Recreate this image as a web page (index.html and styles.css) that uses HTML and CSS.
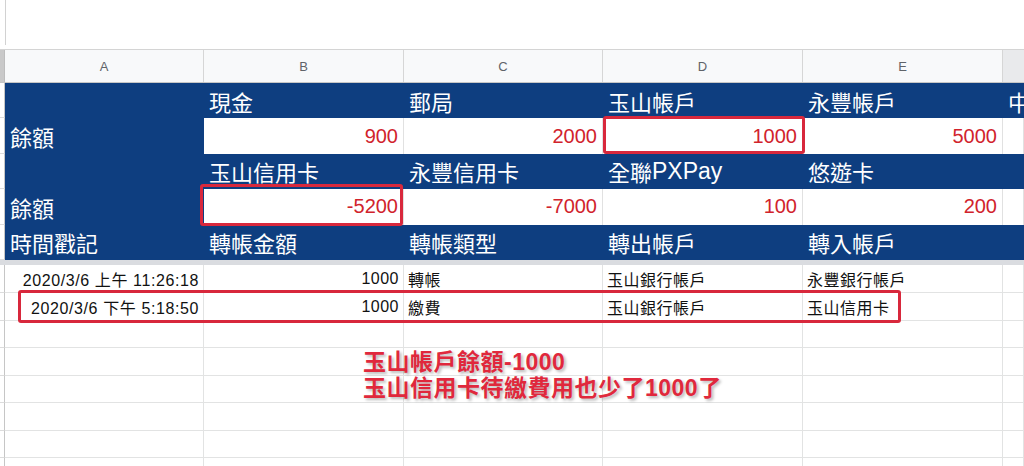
FILE: index.html
```html
<!DOCTYPE html>
<html lang="zh-Hant">
<head>
<meta charset="utf-8">
<title>轉帳紀錄</title>
<link rel="stylesheet" href="styles.css">
</head>
<body>
<div class="sheet">
  <div class="topbar"><div class="topbar-edge"></div></div>

  <div class="grid-row colheads">
    <div class="corner"></div>
    <div class="ch">A</div>
    <div class="ch">B</div>
    <div class="ch">C</div>
    <div class="ch">D</div>
    <div class="ch">E</div>
    <div class="ch ch-f"></div>
  </div>

  <div class="frozen">
    <div class="grid-row brow">
      <div class="rh"></div>
      <div class="bc"></div>
      <div class="bc">現金</div>
      <div class="bc">郵局</div>
      <div class="bc">玉山帳戶</div>
      <div class="bc">永豐帳戶</div>
      <div class="bc">中</div>
    </div>
    <div class="grid-row brow">
      <div class="rh"></div>
      <div class="bc">餘額</div>
      <div class="val">900</div>
      <div class="val">2000</div>
      <div class="val">1000</div>
      <div class="val">5000</div>
      <div class="val"></div>
    </div>
    <div class="grid-row brow">
      <div class="rh"></div>
      <div class="bc"></div>
      <div class="bc">玉山信用卡</div>
      <div class="bc">永豐信用卡</div>
      <div class="bc">全聯<span class="lat">PXPay</span></div>
      <div class="bc">悠遊卡</div>
      <div class="bc"></div>
    </div>
    <div class="grid-row brow">
      <div class="rh"></div>
      <div class="bc">餘額</div>
      <div class="val">-5200</div>
      <div class="val">-7000</div>
      <div class="val">100</div>
      <div class="val">200</div>
      <div class="val"></div>
    </div>
    <div class="grid-row brow">
      <div class="rh"></div>
      <div class="bc">時間戳記</div>
      <div class="bc">轉帳金額</div>
      <div class="bc">轉帳類型</div>
      <div class="bc">轉出帳戶</div>
      <div class="bc">轉入帳戶</div>
      <div class="bc"></div>
    </div>
  </div>

  <div class="divider"></div>

  <div class="data">
    <div class="grid-row drow first">
      <div class="rh"></div>
      <div class="dc num date">2020/3/6 上午 11:26:18</div>
      <div class="dc num">1000</div>
      <div class="dc">轉帳</div>
      <div class="dc">玉山銀行帳戶</div>
      <div class="dc">永豐銀行帳戶</div>
      <div class="dc"></div>
    </div>
    <div class="grid-row drow">
      <div class="rh"></div>
      <div class="dc num date">2020/3/6 下午 5:18:50</div>
      <div class="dc num">1000</div>
      <div class="dc">繳費</div>
      <div class="dc">玉山銀行帳戶</div>
      <div class="dc">玉山信用卡</div>
      <div class="dc"></div>
    </div>
    <div class="grid-row drow"><div class="rh"></div><div class="dc"></div><div class="dc"></div><div class="dc"></div><div class="dc"></div><div class="dc"></div><div class="dc"></div></div>
    <div class="grid-row drow"><div class="rh"></div><div class="dc"></div><div class="dc"></div><div class="dc"></div><div class="dc"></div><div class="dc"></div><div class="dc"></div></div>
    <div class="grid-row drow"><div class="rh"></div><div class="dc"></div><div class="dc"></div><div class="dc"></div><div class="dc"></div><div class="dc"></div><div class="dc"></div></div>
    <div class="grid-row drow"><div class="rh"></div><div class="dc"></div><div class="dc"></div><div class="dc"></div><div class="dc"></div><div class="dc"></div><div class="dc"></div></div>
    <div class="grid-row drow"><div class="rh"></div><div class="dc"></div><div class="dc"></div><div class="dc"></div><div class="dc"></div><div class="dc"></div><div class="dc"></div></div>
    <div class="grid-row drow"><div class="rh"></div><div class="dc"></div><div class="dc"></div><div class="dc"></div><div class="dc"></div><div class="dc"></div><div class="dc"></div></div>
  </div>

  <div class="box box-d"></div>
  <div class="box box-b"></div>
  <div class="box box-row"></div>

  <div class="note">
    <span>玉山帳戶餘額-1000</span>
    <span>玉山信用卡待繳費用也少了1000了</span>
  </div>
</div>
</body>
</html>
```

FILE: styles.css
```css
html, body {
  margin: 0;
  padding: 0;
  background: #fff;
  overflow: hidden;
}

body {
  font-family: "Liberation Sans", "Noto Sans CJK TC", sans-serif;
}

.sheet {
  position: relative;
  width: 1024px;
  height: 466px;
  overflow: hidden;
}

.topbar {
  height: 49px;
  display: flex;
}

.topbar-edge {
  width: 6px;
  height: 45px;
  border-right: 1px solid #d2d2d2;
  box-sizing: border-box;
}

.grid-row {
  display: grid;
  grid-template-columns: 5px 199px 200px 199px 200px 200px 21px;
}

.grid-row > div {
  box-sizing: border-box;
  min-width: 0;
  overflow: hidden;
  white-space: nowrap;
}

/* column headers */
.colheads {
  height: 34px;
  box-sizing: border-box;
  border-top: 1px solid #d4d4d4;
  border-bottom: 1px solid #c6c6c6;
  background: #f8f9fa;
}

.corner {
  background: #c9c9c9;
  border-right: 1px solid #bdbdbd;
}

.ch {
  display: flex;
  align-items: center;
  justify-content: center;
  border-right: 1px solid #d6d6d6;
  font-size: 13px;
  color: #5f6368;
}

.ch-f {
  background: #e9eaec;
  border-right: none;
}

/* frozen blue block */
.brow {
  height: 35.4px;
}

.rh {
  background: #fff;
  border-right: 1px solid #c6c6c6;
  border-bottom: 1px solid #dcdcdc;
}

.bc {
  background: #0e3e80;
  color: #fff;
  font-size: 22px;
  padding: 0 5px;
  display: flex;
  align-items: center;
}

.lat {
  font-size: 23px;
}

.val {
  background: #fff;
  color: #d1232c;
  font-size: 20px;
  padding: 0 5px;
  display: flex;
  align-items: center;
  justify-content: flex-end;
  border-right: 1px solid #e1e1e1;
}

.divider {
  height: 5px;
  background: #dadce0;
}

/* data rows */
.drow {
  height: 27.5px;
}

.drow.first {
  height: 28.5px;
}

.dc {
  font-size: 16px;
  color: #111;
  padding: 0 4px;
  display: flex;
  align-items: center;
  border-right: 1px solid #e2e3e3;
  border-bottom: 1px solid #e2e3e3;
  letter-spacing: 0.5px;
}

.dc.num {
  justify-content: flex-end;
}

.dc.date {
  letter-spacing: 0.6px;
}

/* annotation overlays */
.box {
  position: absolute;
  box-sizing: border-box;
  border: 3px solid #d8283c;
  border-radius: 3px;
}

.box-d {
  left: 603px;
  top: 116px;
  width: 202px;
  height: 38px;
}

.box-b {
  left: 200px;
  top: 184px;
  width: 203px;
  height: 42px;
}

.box-row {
  left: 18px;
  top: 290px;
  width: 883px;
  height: 33px;
}

.note {
  position: absolute;
  left: 363px;
  top: 349px;
  display: flex;
  flex-direction: column;
  font-size: 23px;
  font-weight: 700;
  line-height: 26px;
  letter-spacing: 0.5px;
  color: #e0283c;
  white-space: nowrap;
  text-shadow: 2px 2px 3px rgba(0, 0, 0, 0.28);
}
```
